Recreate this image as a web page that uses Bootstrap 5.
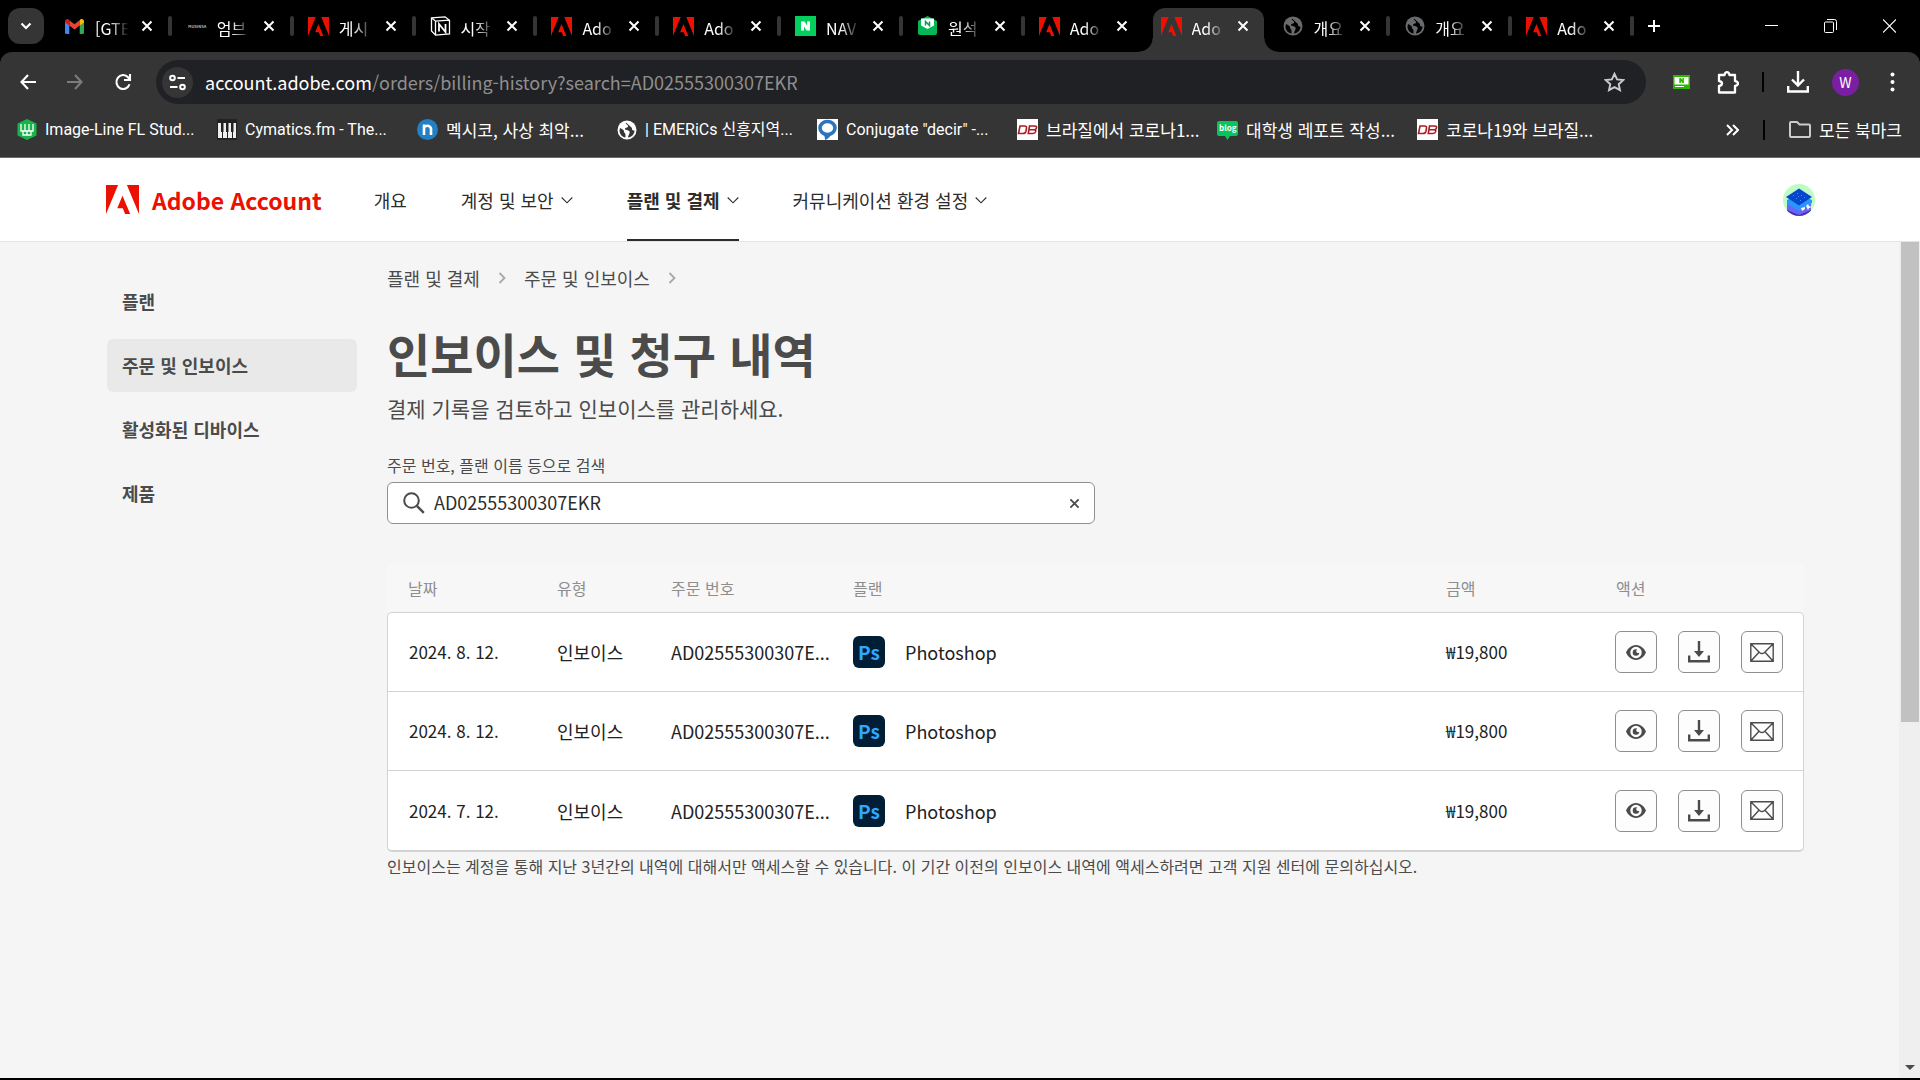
<!DOCTYPE html>
<html lang="ko">
<head>
<meta charset="utf-8">
<meta name="viewport" content="width=device-width, initial-scale=1">
<title>Adobe Account</title>
<link href="https://cdn.jsdelivr.net/npm/bootstrap@5.3.0/dist/css/bootstrap.min.css" rel="stylesheet">
<style>
  body { font-family: "Noto Sans CJK KR", sans-serif; font-size: 18px; line-height: 24px; background: #f5f5f5; color: #2c2c2c; }
  a { text-decoration: none; color: inherit; }
  svg { display: block; flex: none; }
  .browser { font-size: 17px; color: #fff; background: #000; }
  .browser button, .page button { background: none; border: 0; padding: 0; color: inherit; display: flex; align-items: center; justify-content: center; flex: none; }

  /* tab strip */
  .tabstrip { height: 52px; }
  .browser .tab-search { width: 36px; height: 36px; border-radius: 12px; background: #353535; margin: 8px 4px 8px 8px; }
  .tabs { display: grid; grid-template-columns: repeat(13, 1fr); width: 1584px; height: 52px; }
  .tab-item { display: flex; align-items: center; padding: 0 17px 0 16px; position: relative; min-width: 0; }
  .tab-item::after { content: ""; position: absolute; right: -2px; top: 16px; width: 4px; height: 20px; border-radius: 2px; background: #353535; }
  .tab-item.before::after, .tab-item.current::after { display: none; }
  .tab-item .tab-icon { width: 21px; display: flex; justify-content: center; flex: none; }
  .tab-item .tab-name { width: 36px; font-size: 16px; margin: 3px auto 0 10px; overflow: hidden; white-space: nowrap; -webkit-mask-image: linear-gradient(90deg, #000 40%, transparent 94%); mask-image: linear-gradient(90deg, #000 40%, transparent 94%); }
  .tab-shape { position: absolute; left: -8px; right: -12px; bottom: 0; top: 8px; }
  .tab-shape::before { content: ""; position: absolute; left: 16px; right: 14px; top: 0; bottom: 0; border-radius: 12px 12px 0 0; background: #353535; }
  .tab-shape i { position: absolute; bottom: 0; width: 14px; height: 14px; }
  .tab-shape i:first-child { left: 2px; background: radial-gradient(circle at 0 0, transparent 13px, #353535 14px); }
  .tab-shape i:last-child { right: 0; background: radial-gradient(circle at 100% 0, transparent 13px, #353535 14px); }
  .tab-item > :not(.tab-shape) { position: relative; }
  .window-btns { gap: 46px; }

  /* toolbar and bookmarks */
  .chrome-bars { background: #353535; border-radius: 12px 12px 0 0; border-bottom: 1px solid #6a6a6a; }
  .toolbar-row { height: 60px; padding: 8px 25px 8px 18px; }
  .address { height: 44px; border-radius: 22px; background: #202124; padding: 0 21px 0 6px; margin-left: 22px; margin-right: 27px; }
  .browser .site-info { width: 31px; height: 31px; border-radius: 50%; background: #353535; }
  .url-line { font-size: 18px; color: #8f8f8f; }
  .url-line span { color: #fff; }
  .rule { width: 2px; height: 20px; background: #000; }
  .tool-group { gap: 23px; }
  .browser .profile { width: 27px; height: 27px; border-radius: 50%; background: #7b1fa2; font-size: 14px; }
  .bookmarks { height: 45px; padding: 0 18px 10px 17px; }
  .bookmark { gap: 8px; flex: 0 0 200px; white-space: nowrap; }
  .bookmark.latin { font-family: Roboto, "Noto Sans CJK KR", sans-serif; font-size: 16px; }

  /* site header */
  .site-header { background: #fff; height: 84px; padding: 0 105px 0 106px; border-bottom: 1px solid #e4e4e4; }
  .brand-name { color: #eb1000; font-weight: 700; font-size: 23px; margin-left: 13px; }
  .site-nav { gap: 54px; margin-left: 52px; }
  .site-nav a { gap: 7px; height: 83px; border-bottom: 2px solid transparent; padding-top: 2px; }
  .site-nav a.current { font-weight: 700; border-color: #2c2c2c; }

  /* content */
  .content-area { padding: 23px 95px 0 107px; gap: 30px; }
  .side-nav { width: 250px; flex: none; gap: 11px; margin-top: 10px; }
  .side-nav a { height: 53px; padding: 0 15px 2px; border-radius: 6px; font-weight: 700; color: #4b4b4b; display: flex; align-items: center; }
  .side-nav a.current { background: #e9e9e9; }
  .main-col { color: #4b4b4b; min-width: 0; }
  .crumbs { gap: 18px; height: 26px; }
  .page-heading { font-size: 47px; line-height: 60px; font-weight: 700; margin: 32px 0 0; }
  .intro { font-size: 21px; line-height: 32px; margin: 9px 0 0; }
  .field-label { font-size: 16px; margin-top: 29px; display: block; }
  .search-field { width: 708px; height: 42px; border: 1px solid #909090; border-radius: 6px; background: #fff; padding: 0 14px 0 15px; margin-top: 5px; gap: 9px; }
  .search-field input { border: 0; outline: 0; padding: 0 0 2px; flex: 1; color: #2c2c2c; background: none; }
  .orders { width: 100%; table-layout: fixed; border-collapse: separate; border-spacing: 0; margin-top: 40px; color: #222; }
  .orders th { height: 48px; font-size: 16px; font-weight: 400; color: #8e8e8e; background: #f7f7f7; padding: 0 0 0 21px; }
  .orders td { height: 79px; background: #fff; border-top: 1px solid #d3d3d3; padding: 0 0 0 21px; white-space: nowrap; }
  .orders td:first-child { border-left: 1px solid #d3d3d3; }
  .orders td:last-child { border-right: 1px solid #d3d3d3; padding-left: 20px; }
  .orders .amount { font-size: 17px; }
  .orders tbody tr:last-child td { height: 82px; border-bottom: 2px solid #d3d3d3; }
  .orders tbody tr:first-child td:first-child { border-top-left-radius: 5px; }
  .orders tbody tr:first-child td:last-child { border-top-right-radius: 5px; }
  .orders tbody tr:last-child td:first-child { border-bottom-left-radius: 5px; }
  .orders tbody tr:last-child td:last-child { border-bottom-right-radius: 5px; }
  .ps-icon { width: 32px; height: 32px; border-radius: 6px; background: #001e36; color: #31a8ff; font-weight: 700; font-size: 19px; }
  .actions { gap: 21px; }
  .page .icon-btn { width: 42px; height: 42px; border: 1px solid #8e8e8e; border-radius: 6px; background: #fdfdfd; color: #4b4b4b; }
  .note { font-size: 16px; margin: 2px 0 0; }

  /* scrollbar of the page area */
  .scroll-track { width: 21px; background: #efefef; padding: 0 1px 8px 2px; flex: none; }
  .scroll-thumb { width: 18px; height: 58%; background: #c1c1c1; }
  .screen-edge { height: 2px; background: #000; }
</style>
<script src="https://cdn.jsdelivr.net/npm/bootstrap@5.3.0/dist/js/bootstrap.bundle.min.js"></script>
</head>
<body class="d-flex flex-column vh-100 overflow-hidden">

<svg width="0" height="0" class="position-absolute" aria-hidden="true">
  <symbol id="x" viewBox="0 0 12 12"><path d="M1.500 1.500l9 9M10.500 1.500l-9 9" stroke="currentColor" stroke-width="2" fill="none"/></symbol>
  <symbol id="adobe" viewBox="0 0 30 26" preserveAspectRatio="none"><path fill="#eb1000" d="M0 0h11L0 26zM19 0h11v26zM15 9.600l7 16.400h-4.600l-2.100-5.200h-5.100z"/></symbol>
  <symbol id="globe" viewBox="0 0 20 20"><circle cx="10" cy="10" r="9.500" fill="currentColor"/><path d="M9 2.500c-1 2 2.500 2 2 4-.5 1.800-3 1-3 2.500 0 1.400 3.500.500 4.500 2.500.8 1.700-1 3-1.500 6 4-.5 6.500-3.500 6.500-7-2 .5-3-1-2.500-2.500M3 8c2 1 4 1.500 4 3.500 0 1.500 1.500 1.500 1.500 3.500v2.500C5 17 2.500 14 2.500 10.500z" fill="var(--cut)"/></symbol>
  <symbol id="db" viewBox="0 0 21 21"><path fill="#fff" d="M0 0h21v21H0z"/><path d="M3 7h4.500q2.500 0 2 2l-.6 3.500q-.5 2-3 2H1.500zM12.500 7h5q2.500 0 2 1.800-.2 1.700-2.200 1.900 1.700.3 1.400 1.900-.5 1.900-3 1.900H11.300zM12 10.700h6" fill="none" stroke="#a81c22" stroke-width="1.600"/></symbol>
  <symbol id="down" viewBox="0 0 12 8"><path d="M.7 1.500L6 6.800l5.300-5.300" fill="none" stroke="currentColor" stroke-width="1.100"/></symbol>
  <symbol id="next" viewBox="0 0 8 12"><path d="M1.500 1l5 5-5 5" fill="none" stroke="#a8a8a8" stroke-width="1.800"/></symbol>
  <symbol id="eye" viewBox="0 0 20 15"><path fill="currentColor" fill-rule="evenodd" d="M10 0C5 0 1.500 4 0 7.500 1.500 11 5 15 10 15s8.500-4 10-7.500C18.500 4 15 0 10 0zm0 1.800a5.700 5.700 0 1 1 0 11.400 5.700 5.700 0 0 1 0-11.400z"/><path fill="currentColor" d="M10 4.200a3.300 3.300 0 1 0 3.300 3.600c-1.600.7-3-.2-3-1.600 0-.8.300-1.500.9-1.900z"/></symbol>
  <symbol id="save" viewBox="0 0 22 22"><path d="M1.200 14.500v5.700h19.600v-5.700" fill="none" stroke="currentColor" stroke-width="2.400"/><path fill="currentColor" d="M9.800 0h2.400v10H16l-5 6-5-6h3.800z"/></symbol>
  <symbol id="mail" viewBox="0 0 24 19"><path d="M.8.8h22.400v17.400H.8zM.8.800l8.700 8.700q2.500 2.200 5 0L23.200.8M.8 18.200l8.200-9M23.200 18.200l-8.200-9" fill="none" stroke="currentColor" stroke-width="1.400"/></symbol>
</svg>

<header class="browser">
  <div class="tabstrip d-flex align-items-center">
    <button class="tab-search" aria-label="탭 검색"><svg width="12" height="8" viewBox="0 0 12 8"><path d="M1.500 1.500L6 6l4.500-4.500" fill="none" stroke="#fff" stroke-width="2.200"/></svg></button>
    <div class="tabs">
      <div class="tab-item"><span class="tab-icon"><svg width="19" height="15" viewBox="0 0 19 15"><path fill="#4285f4" d="M0 2.500l4.300 3V15H1.500Q0 15 0 13.500z"/><path fill="#34a853" d="M19 2.500l-4.300 3V15h2.800q1.500 0 1.500-1.500z"/><path fill="#ea4335" d="M4.300 1.200l5.200 4 5.200-4v5.300l-5.200 4-5.200-4z"/><path fill="#c5221f" d="M0 2.500Q0 0 2.500 0q1 0 1.800 1.200v5.300L0 3.500z"/><path fill="#fbbc04" d="M19 2.500Q19 0 16.500 0q-1 0-1.800 1.200v5.300l4.300-3z"/></svg></span><span class="tab-name">[GTE</span><button aria-label="닫기"><svg width="12" height="12"><use href="#x"/></svg></button></div>
      <div class="tab-item"><span class="tab-icon"><svg width="21" height="20" viewBox="0 0 21 20"><text x="2" y="12" font-size="4" fill="#bbb" font-weight="700">MUSINSA</text></svg></span><span class="tab-name">엄브</span><button aria-label="닫기"><svg width="12" height="12"><use href="#x"/></svg></button></div>
      <div class="tab-item"><span class="tab-icon"><svg width="21" height="19"><use href="#adobe"/></svg></span><span class="tab-name">게시</span><button aria-label="닫기"><svg width="12" height="12"><use href="#x"/></svg></button></div>
      <div class="tab-item"><span class="tab-icon"><svg width="21" height="20" viewBox="0 0 21 20"><path d="M1.500 1.800L15 .8l4.500 3.400V18l-14 1.200-4-4.200zM1.500 1.800l4 3.400 14-1M5.500 5.200v14" fill="none" stroke="#fff" stroke-width="1.300"/><path d="M9 15.500V8l6.500 8V8" fill="none" stroke="#fff" stroke-width="1.800"/></svg></span><span class="tab-name">시작</span><button aria-label="닫기"><svg width="12" height="12"><use href="#x"/></svg></button></div>
      <div class="tab-item"><span class="tab-icon"><svg width="21" height="19"><use href="#adobe"/></svg></span><span class="tab-name">Ado</span><button aria-label="닫기"><svg width="12" height="12"><use href="#x"/></svg></button></div>
      <div class="tab-item"><span class="tab-icon"><svg width="21" height="19"><use href="#adobe"/></svg></span><span class="tab-name">Ado</span><button aria-label="닫기"><svg width="12" height="12"><use href="#x"/></svg></button></div>
      <div class="tab-item"><span class="tab-icon"><svg width="21" height="20" viewBox="0 0 21 20"><path fill="#03cf5d" d="M0 0h21v20H0z"/><path fill="#fff" d="M6 5.500h3.500l2.600 4v-4H15v9h-3.400L9 10.600v3.900H6z"/></svg></span><span class="tab-name">NAV</span><button aria-label="닫기"><svg width="12" height="12"><use href="#x"/></svg></button></div>
      <div class="tab-item"><span class="tab-icon"><svg width="21" height="20" viewBox="0 0 21 20"><path fill="#00b955" d="M1 5l9.500-5L20 5v12q0 2-2 2H3q-2 0-2-2z"/><path fill="#fff" d="M4 2.500h13v7L10.500 13 4 9.500z"/><path d="M8.500 9.500v-4l4 4v-4" fill="none" stroke="#00a14a" stroke-width="1.500"/></svg></span><span class="tab-name">원석</span><button aria-label="닫기"><svg width="12" height="12"><use href="#x"/></svg></button></div>
      <div class="tab-item before"><span class="tab-icon"><svg width="21" height="19"><use href="#adobe"/></svg></span><span class="tab-name">Ado</span><button aria-label="닫기"><svg width="12" height="12"><use href="#x"/></svg></button></div>
      <div class="tab-item current"><span class="tab-shape"><i></i><i></i></span><span class="tab-icon"><svg width="21" height="19"><use href="#adobe"/></svg></span><span class="tab-name">Ado</span><button aria-label="닫기"><svg width="12" height="12"><use href="#x"/></svg></button></div>
      <div class="tab-item"><span class="tab-icon"><svg width="20" height="20" style="--cut:#000;color:#6a6b6d"><use href="#globe"/></svg></span><span class="tab-name">개요</span><button aria-label="닫기"><svg width="12" height="12"><use href="#x"/></svg></button></div>
      <div class="tab-item"><span class="tab-icon"><svg width="20" height="20" style="--cut:#000;color:#6a6b6d"><use href="#globe"/></svg></span><span class="tab-name">개요</span><button aria-label="닫기"><svg width="12" height="12"><use href="#x"/></svg></button></div>
      <div class="tab-item"><span class="tab-icon"><svg width="21" height="19"><use href="#adobe"/></svg></span><span class="tab-name">Ado</span><button aria-label="닫기"><svg width="12" height="12"><use href="#x"/></svg></button></div>
    </div>
    <button class="ms-3" aria-label="새 탭"><svg width="12" height="14" viewBox="0 0 12 14"><path d="M6 1v12M0 7h12" stroke="#fff" stroke-width="2"/></svg></button>
    <div class="window-btns d-flex ms-auto align-items-center pe-4">
      <button aria-label="최소화"><svg width="13" height="14" viewBox="0 0 13 14"><path d="M0 6.500h13" stroke="#fff"/></svg></button>
      <button aria-label="이전 크기로"><svg width="13" height="14" viewBox="0 0 13 14"><path d="M.5 4q0-1 1-1h7q1 0 1 1v8.500q0 1-1 1h-7q-1 0-1-1zM3 .5h7.500q2 0 2 2V11" fill="none" stroke="#fff"/></svg></button>
      <button aria-label="창 닫기"><svg width="13" height="14" viewBox="0 0 13 14"><path d="M0 .5l13 13M13 .5l-13 13" stroke="#fff" stroke-width="1.100"/></svg></button>
    </div>
  </div>

  <div class="chrome-bars">
    <div class="toolbar-row d-flex align-items-center">
      <div class="d-flex align-items-center gap-4">
        <button class="me-1" aria-label="뒤로"><svg width="20" height="16" viewBox="0 0 20 16"><path d="M18 8H4M10 1L3.500 8l6.500 7" fill="none" stroke="#fff" stroke-width="2.100"/></svg></button>
        <button class="me-1" aria-label="앞으로"><svg width="20" height="16" viewBox="0 0 20 16"><path d="M1 8h14M9 1l6.500 7L9 15" fill="none" stroke="#7c7c7c" stroke-width="2.100"/></svg></button>
        <button aria-label="새로고침"><svg width="20" height="18" viewBox="0 0 20 18"><path d="M15.500 11.200A6.700 7 0 1 1 14 4.200l1.800 2" fill="none" stroke="#fff" stroke-width="2.100"/><path d="M16 1v6h-6" fill="none" stroke="#fff" stroke-width="2.100"/></svg></button>
      </div>
      <div class="address d-flex align-items-center flex-grow-1">
        <button class="site-info" aria-label="사이트 정보"><svg width="17" height="17" viewBox="0 0 17 17"><g fill="none" stroke="#fff" stroke-width="2"><circle cx="3.500" cy="4" r="2.300"/><path d="M8.500 4H16M1 13h7.500"/><circle cx="13.500" cy="13" r="2.300"/></g></svg></button>
        <div class="url-line flex-grow-1 ms-2 ps-1"><span>account.adobe.com</span>/orders/billing-history?search=AD02555300307EKR</div>
        <button aria-label="북마크"><svg width="21" height="20" viewBox="0 0 21 20"><path d="M10.500 1.800l2.600 5.600 6.200.7-4.600 4.100 1.300 6-5.500-3-5.500 3 1.300-6L1.700 8.100l6.200-.7z" fill="none" stroke="#ccc" stroke-width="1.900"/></svg></button>
      </div>
      <div class="tool-group d-flex align-items-center">
        <button class="me-1" aria-label="확장 프로그램 N"><svg width="17" height="14" viewBox="0 0 17 14"><path fill="#2db400" d="M0 0h17v14H0z"/><path fill="#fff" d="M1.500 2h14v7.500h-14zM2 11h9v1H2z"/><path fill="#2db400" d="M6.300 3h1.600l1.400 2V3h1.600v5H9.400L7.900 6v2H6.300z"/></svg></button>
        <button aria-label="확장 프로그램"><svg width="22" height="23" viewBox="0 0 22 23"><path d="M2 4h5.500Q8 1.200 10 1.200T12.500 4H18v6q3 .5 3 2.500T18 15v6.500H2V15q3-.5 3-2.500T2 10z" fill="none" stroke="#fff" stroke-width="2.300" stroke-linejoin="round"/></svg></button>
        <span class="rule"></span>
        <button aria-label="다운로드"><svg width="22" height="22" viewBox="0 0 22 22"><path d="M11 0v14M5 8.500l6 6 6-6M1.200 15v5.500h19.600V15" fill="none" stroke="#fff" stroke-width="2.400"/></svg></button>
        <button class="profile" aria-label="프로필">W</button>
        <button class="ms-2" aria-label="메뉴"><svg width="5" height="20" viewBox="0 0 5 20"><g fill="#fff"><circle cx="2.500" cy="2.500" r="2"/><circle cx="2.500" cy="10" r="2"/><circle cx="2.500" cy="17.500" r="2"/></g></svg></button>
      </div>
    </div>
    <nav class="bookmarks d-flex align-items-center" aria-label="북마크바">
      <a href="#" class="bookmark latin d-flex align-items-center"><svg width="20" height="21" viewBox="0 0 20 21"><path fill="#18b34a" d="M10 0l9.500 4.500v12L10 21 .5 16.500v-12z"/><path d="M4 5v7h12V5M8 5v7M12 5v7M6 12v4h8v-4M10 12v4" fill="none" stroke="#fff" stroke-width="1.300"/></svg>Image-Line FL Stud...</a>
      <a href="#" class="bookmark latin d-flex align-items-center"><svg width="20" height="21" viewBox="0 0 20 21"><path fill="#222" d="M0 0h20v21H0z"/><path fill="#eee" d="M1 4h4v15H1zM6 4h4v15H6zM11 4h4v15h-4zM16 4h3v15h-3z"/><path fill="#222" d="M4 4h2.500v9H4zM9 4h2.500v9H9zM14 4h2.500v9H14z"/></svg>Cymatics.fm - The...</a>
      <a href="#" class="bookmark d-flex align-items-center"><svg width="21" height="21" viewBox="0 0 21 21"><circle cx="10.500" cy="10.500" r="10.500" fill="#2480c4"/><path d="M7 16V5.500M7 9q1-2.200 3.500-2.200T14 9.500V16" fill="none" stroke="#fff" stroke-width="2.600"/></svg>멕시코, 사상 최악...</a>
      <a href="#" class="bookmark latin d-flex align-items-center"><svg width="20" height="20" style="--cut:#353535;color:#fff"><use href="#globe"/></svg>| EMERiCs 신흥지역...</a>
      <a href="#" class="bookmark latin d-flex align-items-center"><svg width="21" height="21" viewBox="0 0 21 21"><path fill="#fff" d="M0 0h21v21H0z"/><ellipse cx="10.500" cy="9" rx="7.500" ry="6.500" fill="none" stroke="#2a75bd" stroke-width="3.600"/><path fill="#2a75bd" d="M6 15h8q-1 4-6 6 .5-3-2-6z"/></svg>Conjugate "decir" -...</a>
      <a href="#" class="bookmark d-flex align-items-center"><svg width="21" height="21"><use href="#db"/></svg>브라질에서 코로나1...</a>
      <a href="#" class="bookmark d-flex align-items-center"><svg width="21" height="21" viewBox="0 0 21 21"><path fill="#03c75a" d="M2 2h17q2 0 2 2v11q0 2-2 2h-6l-2.500 4L8 17H2q-2 0-2-2V4q0-2 2-2z"/><text x="2" y="12" font-size="8" font-weight="700" fill="#fff">blog</text></svg>대학생 레포트 작성...</a>
      <a href="#" class="bookmark d-flex align-items-center"><svg width="21" height="21"><use href="#db"/></svg>코로나19와 브라질...</a>
      <div class="d-flex align-items-center ms-auto">
        <button aria-label="더보기"><svg width="13" height="12" viewBox="0 0 13 12"><path d="M1 1l5 5-5 5M7 1l5 5-5 5" fill="none" stroke="#fff" stroke-width="2"/></svg></button>
        <span class="rule ms-4 me-4"></span>
        <a href="#" class="d-flex align-items-center gap-2 text-nowrap"><svg width="22" height="17" viewBox="0 0 22 17"><path d="M1 2q0-1 1-1h6l2.500 2.500H20q1 0 1 1V15q0 1-1 1H2q-1 0-1-1z" fill="none" stroke="#ccc" stroke-width="2"/></svg>모든 북마크</a>
      </div>
    </nav>
  </div>
</header>

<div class="page d-flex flex-column flex-grow-1">
  <header class="site-header d-flex align-items-center">
    <a href="#" class="d-flex align-items-center"><svg width="33" height="29"><use href="#adobe"/></svg><span class="brand-name">Adobe Account</span></a>
    <nav class="site-nav d-flex">
      <a href="#" class="d-flex align-items-center">개요</a>
      <a href="#" class="d-flex align-items-center">계정 및 보안<svg width="12" height="8"><use href="#down"/></svg></a>
      <a href="#" class="d-flex align-items-center current">플랜 및 결제<svg width="12" height="8"><use href="#down"/></svg></a>
      <a href="#" class="d-flex align-items-center">커뮤니케이션 환경 설정<svg width="12" height="8"><use href="#down"/></svg></a>
    </nav>
    <button class="ms-auto" aria-label="계정"><svg width="32" height="32" viewBox="0 0 32 32"><clipPath id="round"><circle cx="16" cy="16" r="16"/></clipPath><g clip-path="url(#round)"><path fill="#bdfcc4" d="M0 0h32v32H0z"/><path fill="#4a2fb5" d="M4 24l12-5 12 5v8H4z"/><path fill="#6a63f5" d="M4 20l12-4 12 4v6l-12 5-12-5z"/><path fill="#2b95ff" d="M4 16l12-6 13 6v3l-13 8L4 20z"/><path fill="#0545d0" d="M16 4.500L29 13l-13 8.500L3 13z"/><path fill="#4b8df5" d="M10 11h1v1h-1zM14 9h1v1h-1zM18 11h1v1h-1zM13 14h1v1h-1zM17 16h1v1h-1zM21 13h1v1h-1zM15 12h1v1h-1z"/><path fill="#fff" d="M18 24l4-1v2l-3 2zM23 22l2-2 1 2 3 1-3 1-1 2-1-2z"/></g></svg></button>
  </header>

  <div class="d-flex flex-grow-1">
    <div class="content-area d-flex flex-grow-1">
      <nav class="side-nav d-flex flex-column">
        <a href="#">플랜</a>
        <a href="#" class="current">주문 및 인보이스</a>
        <a href="#">활성화된 디바이스</a>
        <a href="#">제품</a>
      </nav>
      <main class="main-col flex-grow-1">
        <nav class="crumbs d-flex align-items-center">
          <a href="#">플랜 및 결제</a><svg width="8" height="12"><use href="#next"/></svg>
          <a href="#">주문 및 인보이스</a><svg width="8" height="12"><use href="#next"/></svg>
        </nav>
        <h1 class="page-heading">인보이스 및 청구 내역</h1>
        <p class="intro">결제 기록을 검토하고 인보이스를 관리하세요.</p>
        <label class="field-label" for="q">주문 번호, 플랜 이름 등으로 검색</label>
        <div class="search-field d-flex align-items-center">
          <svg width="22" height="22" viewBox="0 0 22 22"><circle cx="8.500" cy="8.500" r="7.300" fill="none" stroke="#4b4b4b" stroke-width="2"/><path d="M13.800 13.800l7 7" stroke="#4b4b4b" stroke-width="2.400"/></svg>
          <input id="q" type="text" value="AD02555300307EKR">
          <button aria-label="지우기"><svg width="11" height="11"><use href="#x"/></svg></button>
        </div>
        <table class="orders">
          <colgroup><col style="width:149px"><col style="width:114px"><col style="width:182px"><col><col style="width:170px"><col style="width:209px"></colgroup>
          <thead><tr><th>날짜</th><th>유형</th><th>주문 번호</th><th>플랜</th><th>금액</th><th>액션</th></tr></thead>
          <tbody>
            <tr><td class="amount">2024. 8. 12.</td><td>인보이스</td><td>AD02555300307E...</td><td><div class="d-flex align-items-center"><span class="ps-icon d-flex align-items-center justify-content-center">Ps</span><span class="ms-3 ps-1">Photoshop</span></div></td><td class="amount">₩19,800</td><td><div class="d-flex actions"><button class="icon-btn" aria-label="보기"><svg width="20" height="15"><use href="#eye"/></svg></button><button class="icon-btn" aria-label="다운로드"><svg width="22" height="22"><use href="#save"/></svg></button><button class="icon-btn" aria-label="이메일"><svg width="24" height="19"><use href="#mail"/></svg></button></div></td></tr>
            <tr><td class="amount">2024. 8. 12.</td><td>인보이스</td><td>AD02555300307E...</td><td><div class="d-flex align-items-center"><span class="ps-icon d-flex align-items-center justify-content-center">Ps</span><span class="ms-3 ps-1">Photoshop</span></div></td><td class="amount">₩19,800</td><td><div class="d-flex actions"><button class="icon-btn" aria-label="보기"><svg width="20" height="15"><use href="#eye"/></svg></button><button class="icon-btn" aria-label="다운로드"><svg width="22" height="22"><use href="#save"/></svg></button><button class="icon-btn" aria-label="이메일"><svg width="24" height="19"><use href="#mail"/></svg></button></div></td></tr>
            <tr><td class="amount">2024. 7. 12.</td><td>인보이스</td><td>AD02555300307E...</td><td><div class="d-flex align-items-center"><span class="ps-icon d-flex align-items-center justify-content-center">Ps</span><span class="ms-3 ps-1">Photoshop</span></div></td><td class="amount">₩19,800</td><td><div class="d-flex actions"><button class="icon-btn" aria-label="보기"><svg width="20" height="15"><use href="#eye"/></svg></button><button class="icon-btn" aria-label="다운로드"><svg width="22" height="22"><use href="#save"/></svg></button><button class="icon-btn" aria-label="이메일"><svg width="24" height="19"><use href="#mail"/></svg></button></div></td></tr>
          </tbody>
        </table>
        <p class="note">인보이스는 계정을 통해 지난 3년간의 내역에 대해서만 액세스할 수 있습니다. 이 기간 이전의 인보이스 내역에 액세스하려면 고객 지원 센터에 문의하십시오.</p>
      </main>
    </div>
    <div class="scroll-track d-flex flex-column align-items-center justify-content-between" aria-hidden="true">
      <div class="scroll-thumb"></div>
      <svg width="10" height="5" viewBox="0 0 10 5"><path fill="#4b4b4b" d="M0 0h10L5 5z"/></svg>
    </div>
  </div>
</div>
<div class="screen-edge"></div>
</body>
</html>
